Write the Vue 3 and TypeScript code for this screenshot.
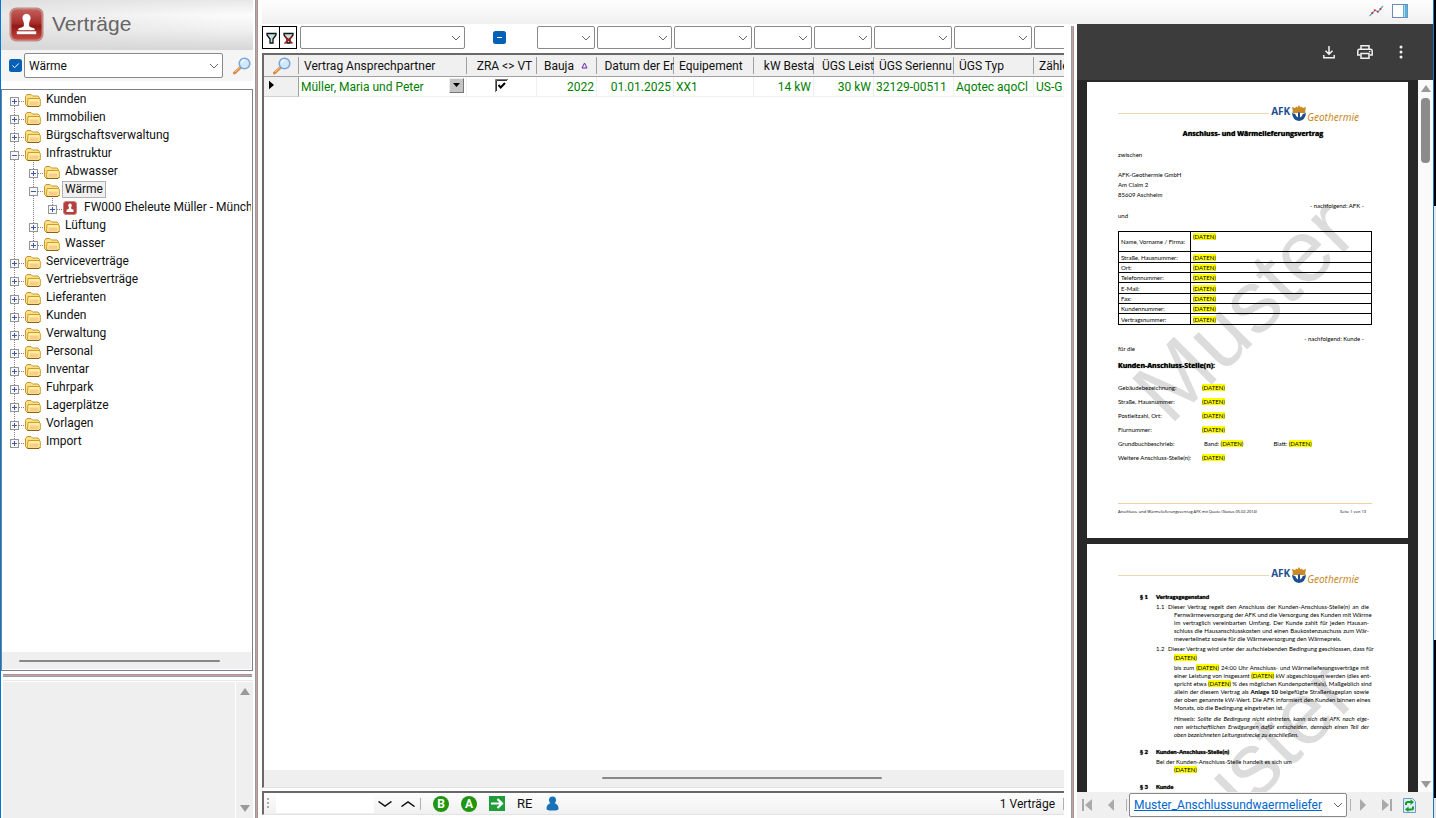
<script setup lang="ts">
import { computed, ref } from 'vue'

interface TreeNode {
  id: number
  label: string
  depth: number
  kind: 'folder' | 'contract'
  open?: boolean
}

const nodes = ref<TreeNode[]>([
  { id: 1, label: 'Kunden', depth: 0, kind: 'folder' },
  { id: 2, label: 'Immobilien', depth: 0, kind: 'folder' },
  { id: 3, label: 'Bürgschaftsverwaltung', depth: 0, kind: 'folder' },
  { id: 4, label: 'Infrastruktur', depth: 0, kind: 'folder', open: true },
  { id: 5, label: 'Abwasser', depth: 1, kind: 'folder' },
  { id: 6, label: 'Wärme', depth: 1, kind: 'folder', open: true },
  { id: 7, label: 'FW000 Eheleute Müller - Münch', depth: 2, kind: 'contract' },
  { id: 8, label: 'Lüftung', depth: 1, kind: 'folder' },
  { id: 9, label: 'Wasser', depth: 1, kind: 'folder' },
  { id: 10, label: 'Serviceverträge', depth: 0, kind: 'folder' },
  { id: 11, label: 'Vertriebsverträge', depth: 0, kind: 'folder' },
  { id: 12, label: 'Lieferanten', depth: 0, kind: 'folder' },
  { id: 13, label: 'Kunden', depth: 0, kind: 'folder' },
  { id: 14, label: 'Verwaltung', depth: 0, kind: 'folder' },
  { id: 15, label: 'Personal', depth: 0, kind: 'folder' },
  { id: 16, label: 'Inventar', depth: 0, kind: 'folder' },
  { id: 17, label: 'Fuhrpark', depth: 0, kind: 'folder' },
  { id: 18, label: 'Lagerplätze', depth: 0, kind: 'folder' },
  { id: 19, label: 'Vorlagen', depth: 0, kind: 'folder' },
  { id: 20, label: 'Import', depth: 0, kind: 'folder' },
])
const selectedId = ref(6)

const visibleNodes = computed(() => {
  const out: TreeNode[] = []
  let hiddenBelow = Infinity
  for (const n of nodes.value) {
    if (n.depth > hiddenBelow) continue
    hiddenBelow = Infinity
    out.push(n)
    if (!n.open) hiddenBelow = n.depth
  }
  return out
})

const isLast = (index: number, depth: number): boolean => {
  for (const n of visibleNodes.value.slice(index + 1)) {
    if (n.depth < depth) return true
    if (n.depth === depth) return false
  }
  return true
}

interface Column {
  key: string
  title: string
  value: string
  align: 'left' | 'right' | 'center'
}
const columns: Column[] = [
  { key: 'partner', title: 'Vertrag Ansprechpartner', value: 'Müller, Maria und Peter', align: 'left' },
  { key: 'zra', title: 'ZRA <> VT', value: '', align: 'center' },
  { key: 'year', title: 'Bauja', value: '2022', align: 'right' },
  { key: 'date', title: 'Datum der Er', value: '01.01.2025', align: 'right' },
  { key: 'equip', title: 'Equipement', value: 'XX1', align: 'left' },
  { key: 'kw', title: 'kW Besta', value: '14 kW', align: 'right' },
  { key: 'power', title: 'ÜGS Leist', value: '30 kW', align: 'right' },
  { key: 'serial', title: 'ÜGS Seriennu', value: '32129-00511', align: 'left' },
  { key: 'type', title: 'ÜGS Typ', value: 'Aqotec aqoCl', align: 'left' },
  { key: 'meter', title: 'Zähle', value: 'US-G', align: 'left' },
]
const zraChecked = ref(true)
const filterOn = ref(true)

const personRows = ['Name, Vorname / Firma:', 'Straße, Hausnummer:', 'Ort:', 'Telefonnummer:', 'E-Mail:', 'Fax:', 'Kundennummer:', 'Vertragsnummer:']
const siteRows = ['Gebäudebezeichnung:', 'Straße, Hausnummer:', 'Postleitzahl, Ort:', 'Flurnummer:', 'Grundbuchbeschrieb:', 'Weitere Anschluss-Stelle(n):']

const clause11 = [
  'Fernwärmeversorgung der AFK und die Versorgung des Kunden mit Wärme',
  'im vertraglich vereinbarten Umfang. Der Kunde zahlt für jeden Hausan-',
  'schluss die Hausanschlusskosten und einen Baukostenzuschuss zum Wär-',
]
</script>

<template>
  <div class="app">
    <aside class="side">
      <header class="side-head">
        <svg class="stamp" viewBox="0 0 36 36" aria-hidden="true">
          <defs>
            <linearGradient id="red" x1="0" y1="0" x2="0" y2="1">
              <stop offset="0" stop-color="#c4605c" />
              <stop offset=".45" stop-color="#a82f2c" />
              <stop offset=".55" stop-color="#8f1815" />
              <stop offset="1" stop-color="#c54a42" />
            </linearGradient>
          </defs>
          <rect x=".5" y=".5" width="35" height="35" rx="7" fill="#b98c88" />
          <rect x="2" y="2" width="32" height="32" rx="6" fill="url(#red)" stroke="#d08c86" />
          <path d="M18 7a4.200 4.200 0 0 1 4 5.500c-.8 2-1.600 3.500-1.300 6.500.2 1.500 1.800 2 4.300 2.500 1.200.3 1.500 1 1.500 2.500h-17c0-1.500.3-2.200 1.500-2.500 2.500-.5 4.100-1 4.300-2.500.3-3-.5-4.500-1.300-6.500A4.200 4.200 0 0 1 18 7z" fill="#fff" />
          <path d="M8 25h20v3H8z" fill="#fff" />
        </svg>
        <h1>Verträge</h1>
      </header>

      <div class="search">
        <label class="blue-check"><input v-model="filterOn" type="checkbox" aria-label="Filter aktiv" /><svg viewBox="0 0 13 13"><rect width="13" height="13" rx="2.500" fill="#0560b6" /><path v-if="filterOn" d="M3.500 6.500l2.200 2.200 4-4.200" fill="none" stroke="#fff" /></svg></label>
        <span class="combo">
          <select aria-label="Suche"><option>Wärme</option></select>
          <svg viewBox="0 0 10 6"><path d="M1 1l4 4 4-4" /></svg>
        </span>
        <button class="plain" aria-label="Suchen">
          <svg class="lens" viewBox="0 0 18 18"><path d="M1.500 16L8 10" stroke="#d9893f" stroke-width="3" stroke-linecap="round" /><path d="M2 15l5-4.500" stroke="#f6c79a" stroke-width="1" /><circle cx="11.500" cy="6.500" r="5.300" fill="#cfe8fb" stroke="#7ba6d6" stroke-width="1.500" /><path d="M8.500 6a3 3 0 0 1 3-2.800" fill="none" stroke="#fff" stroke-width="1.500" /></svg>
        </button>
      </div>

      <div class="tree-box">
        <ul class="tree" role="tree">
          <li v-for="(n, i) in visibleNodes" :key="n.id" class="node" role="treeitem">
            <span v-for="d in n.depth" :key="d" class="guide" :class="{ line: !isLast(i, d - 1) }"></span>
            <span class="guide stub line" :class="{ first: i === 0, end: isLast(i, n.depth) }">
              <button class="toggle" :aria-label="n.label + ' umschalten'" @click="n.open = !n.open">
                <svg viewBox="0 0 9 9"><rect x=".5" y=".5" width="8" height="8" fill="#f8f8f8" stroke="#959595" /><path :d="n.open ? 'M2 4.500h5' : 'M2 4.500h5M4.500 2v5'" stroke="#3c5aa8" /></svg>
              </button>
            </span>
            <svg v-if="n.kind === 'folder'" class="folder" viewBox="0 0 16 13"><path d="M.5 10.500V2.500L2 .5h4L7.500 2h5.500l1.500 1.500v7.500l-1 1.500h-11z" fill="#fbe08a" stroke="#c9952a" /><path d="M3 4.500h11l1.300.8v5.500l-1.500 1.500H3.500L2.500 11z" fill="#fff1a0" stroke="#d09a2c" /><path d="M4.500 7.500h9v3.500h-9z" fill="#fbcb8c" /><path d="M2.500 12.500h11.500l1.500-1.500" fill="none" stroke="#8a6210" /></svg>
            <svg v-else class="folder mini" viewBox="0 0 14 14"><rect x=".5" y=".5" width="13" height="13" rx="2.500" fill="#b53f3b" stroke="#c98580" /><path d="M7 2.500a1.800 1.800 0 0 1 1.500 2.800C8 6.500 8 7.500 8.500 8l2 .7V11h-7V8.700l2-.7c.5-.5.5-1.500 0-2.700A1.800 1.800 0 0 1 7 2.500z" fill="#fff" /></svg>
            <button class="label" :class="{ selected: n.id === selectedId }" @click="selectedId = n.id">{{ n.label }}</button>
          </li>
        </ul>
        <div class="hbar"><span></span></div>
      </div>
      <div class="split-h"></div>
      <div class="notes">
        <div class="notes-body"></div>
        <div class="vbar"><i class="up"></i><i class="down"></i></div>
      </div>
    </aside>

    <div class="split-v"></div>

    <main class="work">
      <div class="topbar">
        <button class="plain" aria-label="Diagramm"><svg class="chart" viewBox="0 0 15 12"><path d="M.5 11L4 7.500l2-2.500 3 2L14 1" fill="none" stroke="#5aa9dc" stroke-width="1.200" /><path d="M2.500 8.500l1.500-1M5 5.500L6.500 5M8 7l1.500-.5M11 4.500l1-1" stroke="#e02020" stroke-width="1.800" /></svg></button>
        <button class="plain" aria-label="Seitenleiste"><svg class="pane" viewBox="0 0 16 14"><rect x=".5" y=".5" width="15" height="13" fill="#fff" stroke="#6c8ab5" /><path d="M11 1h4.500v12.500H11z" fill="#5fb0d8" /><path d="M12 1h1v12h-1z" fill="#a8d8ee" /></svg></button>
      </div>

      <div class="panes">
        <section class="grid-pane">
          <div class="filters">
            <div class="filter-buttons">
              <button aria-label="Filtern"><svg viewBox="0 0 13 14"><path d="M2 2.500h9v1.500L8 8v4H5V8L2 4z" fill="#bfe3e3" stroke="#111" stroke-width="1.300" /></svg></button>
              <button aria-label="Filter löschen"><svg viewBox="0 0 13 14"><path d="M2 2.500h9v1.500L8 8v4H5V8L2 4z" fill="#bfe3e3" stroke="#111" stroke-width="1.300" /><path d="M2.500 5l8 7.500M10.500 5l-8 7.500" stroke="#a01818" stroke-width="1.600" /></svg></button>
            </div>
            <template v-for="c in columns" :key="c.key">
              <label v-if="c.key === 'zra'" class="cell zra blue-check"><input type="checkbox" :indeterminate="true" aria-label="ZRA <> VT Filter" /><svg viewBox="0 0 13 13"><rect width="13" height="13" rx="2.500" fill="#0560b6" /><path d="M4 6.500h5" stroke="#fff" /></svg></label>
              <span v-else class="cell combo" :class="c.key">
                <select :aria-label="c.title + ' Filter'"><option></option></select>
                <svg viewBox="0 0 10 6"><path d="M1 1l4 4 4-4" /></svg>
              </span>
            </template>
          </div>

          <div class="table-box">
            <div class="table-clip">
              <table>
                <colgroup>
                  <col class="marker" />
                  <col v-for="c in columns" :key="c.key" :class="c.key" />
                </colgroup>
                <thead>
                  <tr>
                    <th class="corner"><svg class="lens" viewBox="0 0 18 18"><path d="M1.500 16L8 10" stroke="#d9893f" stroke-width="3" stroke-linecap="round" /><path d="M2 15l5-4.500" stroke="#f6c79a" stroke-width="1" /><circle cx="11.500" cy="6.500" r="5.300" fill="#cfe8fb" stroke="#7ba6d6" stroke-width="1.500" /><path d="M8.500 6a3 3 0 0 1 3-2.800" fill="none" stroke="#fff" stroke-width="1.500" /></svg></th>
                    <th v-for="c in columns" :key="c.key" :class="[c.align, c.key]"><span>{{ c.title }}<svg v-if="c.key === 'year'" class="sort" viewBox="0 0 7 7"><path d="M3.500 1L6 6H1z" fill="none" stroke="#6a1fb0" /></svg></span></th>
                  </tr>
                </thead>
                <tbody>
                  <tr>
                    <td class="corner row-mark"><svg viewBox="0 0 6 10"><path d="M0 0l6 5-6 5z" /></svg></td>
                    <td v-for="c in columns" :key="c.key" :class="c.align">
                      <label v-if="c.key === 'zra'" class="old-check"><input v-model="zraChecked" type="checkbox" aria-label="ZRA <> VT" /><svg viewBox="0 0 13 13"><path d="M0 0h13v13H0z" fill="#fff" /><path d="M.5 13V.5H13" fill="none" stroke="#777" /><path d="M1.500 12V1.500H12" fill="none" stroke="#333" /><path v-if="zraChecked" d="M3.500 6l2.200 2.500L10 4" fill="none" stroke="#000" stroke-width="2" /></svg></label>
                      <div v-else-if="c.key === 'partner'" class="picker"><span>{{ c.value }}</span><button aria-label="Ansprechpartner wählen"><svg viewBox="0 0 7 4"><path d="M0 0h7L3.500 4z" /></svg></button></div>
                      <template v-else>{{ c.value }}</template>
                    </td>
                  </tr>
                </tbody>
              </table>
            </div>
            <div class="hbar wide"><span></span></div>
          </div>

          <footer class="status">
            <i class="grip"></i>
            <input class="jump" aria-label="Suchtext" />
            <button class="plain" aria-label="Weiter"><svg class="arrow" viewBox="0 0 14 6"><path d="M.5.500L7 5 13.500.500" /></svg></button>
            <button class="plain" aria-label="Zurück"><svg class="arrow" viewBox="0 0 14 6"><path d="M.5 5.500L7 1l6.500 4.500" /></svg></button>
            <i class="sep"></i>
            <button class="round">B</button>
            <button class="round">A</button>
            <button class="plain" aria-label="Öffnen"><svg class="go" viewBox="0 0 16 15"><path d="M0 0h16v15H0z" fill="#1f9d38" /><path d="M2 7.500h11M8.500 3l4.500 4.500-4.500 4.500" fill="none" stroke="#fff" stroke-width="2.200" /></svg></button>
            <button class="plain re">RE</button>
            <button class="plain" aria-label="Person"><svg class="person" viewBox="0 0 13 15"><circle cx="6.500" cy="4" r="3.500" fill="#1673b9" /><path d="M.5 12.500C.5 9 3 7 6.500 7s6 2 6 5.500c0 1.500-1 2-6 2s-6-.5-6-2z" fill="#1673b9" /></svg></button>
            <span class="count">1 Verträge</span>
            <i class="sep"></i>
          </footer>
        </section>

        <div class="split-v inner"></div>

        <section class="viewer">
          <div class="pdf-bar">
            <button class="plain" aria-label="Herunterladen"><svg class="dl" viewBox="0 0 12 14"><path d="M6 1v8M2.500 5.700L6 9.200l3.500-3.500M.8 10v2.800h10.400V10" fill="none" stroke="#f1f1f1" stroke-width="1.500" /></svg></button>
            <button class="plain" aria-label="Drucken"><svg class="pr" viewBox="0 0 16 14"><path d="M4 4V.8h8V4M3.500 10H.8V6Q.8 4.300 2.500 4.300h11q1.700 0 1.700 1.700v4h-2.700" fill="none" stroke="#f1f1f1" stroke-width="1.500" /><path d="M4 8.500h8v4.700H4z" fill="none" stroke="#f1f1f1" stroke-width="1.500" /><circle cx="12.700" cy="6.500" r=".8" fill="#f1f1f1" /></svg></button>
            <button class="plain" aria-label="Mehr"><svg class="more" viewBox="0 0 4 14"><circle cx="2" cy="2" r="1.500" /><circle cx="2" cy="7" r="1.500" /><circle cx="2" cy="12" r="1.500" /></svg></button>
          </div>

          <div class="pdf-area">
            <div class="pdf-scroll">
              <article class="page">
                <span class="watermark">Muster</span>
                <div class="brand"><i></i><b>AFK</b><svg viewBox="0 0 14 16"><path d="M0 2l3 1L4.500 1.500 5.500 2.500 7 0l1.500 2.500 1-1L11 3l3-1-.7 3.500.2 2.500H.5l.2-2.500z" fill="#c98a25" /><path d="M0 8q.5 7 7 8 6.500-1 7-8l-3.300 1q-.5 3-2.700 3.500V7.500H6v5Q3.800 12 3.300 9z" fill="#1d4f8f" /></svg><em>Geothermie</em></div>
                <h2 class="title">Anschluss- und Wärmelieferungsvertrag</h2>
                <p>zwischen</p>
                <address>AFK-Geothermie GmbH<br />Am Claim 2<br />85609 Aschheim</address>
                <p class="to-right">- nachfolgend: AFK -</p>
                <p>und</p>
                <table class="person-table">
                  <tbody>
                    <tr v-for="r in personRows" :key="r"><th scope="row">{{ r }}</th><td><mark>(DATEN)</mark></td></tr>
                  </tbody>
                </table>
                <p class="to-right">- nachfolgend: Kunde -</p>
                <p>für die</p>
                <h3>Kunden-Anschluss-Stelle(n):</h3>
                <dl>
                  <div v-for="r in siteRows" :key="r">
                    <dt>{{ r }}</dt>
                    <dd v-if="r.startsWith('Grund')" class="pair"><span>Band: <mark>(DATEN)</mark></span><span>Blatt: <mark>(DATEN)</mark></span></dd>
                    <dd v-else><mark>(DATEN)</mark></dd>
                  </div>
                </dl>
                <footer class="page-foot"><span>Anschluss- und Wärmelieferungsvertrag AFK mit Quote (Status 05.02.2014)</span><span>Seite 1 von 13</span></footer>
              </article>

              <article class="page second">
                <span class="watermark">Muster</span>
                <div class="brand"><i></i><b>AFK</b><svg viewBox="0 0 14 16"><path d="M0 2l3 1L4.500 1.500 5.500 2.500 7 0l1.500 2.500 1-1L11 3l3-1-.7 3.500.2 2.500H.5l.2-2.500z" fill="#c98a25" /><path d="M0 8q.5 7 7 8 6.500-1 7-8l-3.300 1q-.5 3-2.700 3.500V7.500H6v5Q3.800 12 3.300 9z" fill="#1d4f8f" /></svg><em>Geothermie</em></div>
                <h4><span>§ 1</span>Vertragsgegenstand</h4>
                <div class="clause">
                  <p class="lead"><span>1.1</span><span class="full">Dieser Vertrag regelt den Anschluss der Kunden-Anschluss-Stelle(n) an die</span></p>
                  <p v-for="l in clause11" :key="l" class="full">{{ l }}</p>
                  <p>meverteilnetz sowie für die Wärmeversorgung den Wärmepreis.</p>
                </div>
                <div class="clause spaced">
                  <p class="lead"><span>1.2</span><span class="full">Dieser Vertrag wird unter der aufschiebenden Bedingung geschlossen, dass für</span></p>
                  <p><mark>(DATEN)</mark></p>
                </div>
                <div class="clause">
                  <p class="full">bis zum <mark>(DATEN)</mark> 24:00 Uhr Anschluss- und Wärmelieferungsverträge mit</p>
                  <p class="full">einer Leistung von insgesamt <mark>(DATEN)</mark> kW abgeschlossen werden (dies ent-</p>
                  <p class="full">spricht etwa <mark>(DATEN)</mark> % des möglichen Kundenpotentials). Maßgeblich sind</p>
                  <p class="full">allein der diesem Vertrag als <strong>Anlage 10</strong> beigefügte Straßenlageplan sowie</p>
                  <p class="full">der oben genannte kW-Wert. Die AFK informiert den Kunden binnen eines</p>
                  <p>Monats, ob die Bedingung eingetreten ist.</p>
                </div>
                <div class="clause note">
                  <p class="full">Hinweis: Sollte die Bedingung nicht eintreten, kann sich die AFK nach eige-</p>
                  <p class="full">nen wirtschaftlichen Erwägungen dafür entscheiden, dennoch einen Teil der</p>
                  <p>oben bezeichneten Leitungsstrecke zu erschließen.</p>
                </div>
                <h4><span>§ 2</span>Kunden-Anschluss-Stelle(n)</h4>
                <div class="clause final">
                  <p class="lead">Bei der Kunden-Anschluss-Stelle handelt es sich um</p>
                  <p><mark>(DATEN)</mark></p>
                </div>
                <h4><span>§ 3</span>Kunde</h4>
              </article>
            </div>
            <div class="vbar pdf"><i class="up"></i><b></b><i class="down"></i></div>
          </div>

          <nav class="pager">
            <button class="plain" aria-label="Erste"><svg viewBox="0 0 11 12"><path d="M0 0h2v12H0zM10 0v12L3 6z" /></svg></button>
            <button class="plain prev" aria-label="Vorherige"><svg viewBox="0 0 11 12"><path d="M8 0v12L2 6z" /></svg></button>
            <i class="sep"></i>
            <span class="combo link">
              <select aria-label="Dokument"><option>Muster_Anschlussundwaermeliefer</option></select>
              <svg viewBox="0 0 10 6"><path d="M1 1l4 4 4-4" /></svg>
            </span>
            <i class="sep"></i>
            <button class="plain next" aria-label="Nächste"><svg viewBox="0 0 11 12"><path d="M3 0v12l6-6z" /></svg></button>
            <button class="plain last" aria-label="Letzte"><svg viewBox="0 0 11 12"><path d="M9 0h2v12H9zM1 0v12l7-6z" /></svg></button>
            <button class="plain" aria-label="Aktualisieren"><svg class="refresh" viewBox="0 0 13 15"><path d="M.5.500h9l3 3v11H.5z" fill="#dcebf7" stroke="#6f9cc4" /><path d="M3 7V5.500Q3 4 5 4h3.500M10 8.500V10q0 1.500-2 1.500H4.500" fill="none" stroke="#159a22" stroke-width="2" /><path d="M7.500 1.500L11 4 7.500 7zM5.500 8.500L2 11.500 5.500 14z" fill="#159a22" /></svg></button>
          </nav>
        </section>
      </div>
    </main>
    <div class="edge"></div>
  </div>
</template>

<style>
html,
body {
  background: #fff;
  overflow: hidden;
}
</style>

<style scoped>
* {
  box-sizing: border-box;
}
.app {
  display: flex;
  height: 100vh;
  border-left: 1px solid #0078d7;
  font: 12px/18px Roboto, "Open Sans", sans-serif;
  color: #111;
  background: #fff;
}
svg {
  display: block;
  flex: none;
}
button,
select,
input {
  font: inherit;
  color: inherit;
  margin: 0;
}
button {
  padding: 0;
}
.plain {
  border: 0;
  background: none;
  display: grid;
  place-items: center;
}
ul,
p,
h1,
h2,
h3,
h4,
dl,
dd {
  margin: 0;
  padding: 0;
}

/* combo boxes */
.combo {
  display: grid;
  height: 23px;
  min-width: 0;
}
.combo > * {
  grid-area: 1 / 1;
}
.combo select {
  appearance: none;
  width: 100%;
  min-width: 0;
  height: 100%;
  padding: 0 18px 0 4px;
  border: 1px solid #8a8a8a;
  border-radius: 2px;
  background: #fff;
}
.combo svg {
  width: 10px;
  height: 6px;
  justify-self: end;
  align-self: center;
  margin-right: 4px;
  fill: none;
  stroke: #666;
  pointer-events: none;
}
.blue-check {
  display: grid;
  place-items: center;
}
.blue-check > * {
  grid-area: 1 / 1;
  width: 13px;
  height: 13px;
  margin: 0;
}
.blue-check input,
.old-check input {
  opacity: 0;
}

/* left side */
.side {
  width: 252px;
  flex: none;
  display: flex;
  flex-direction: column;
}
.side-head {
  height: 50px;
  flex: none;
  display: flex;
  align-items: center;
  gap: 8px;
  padding: 0 8px 2px;
  background: linear-gradient(90deg, #d8d8d888 0, #d8d8d800 90%), linear-gradient(#e8e8e8, #fbfbfb 30%, #f0f0f0 60%, #d6d6d6);
}
.stamp {
  width: 35px;
  height: 35px;
}
h1 {
  font: 21px/26px "Liberation Sans", sans-serif;
  color: #666;
}
.search {
  display: flex;
  align-items: center;
  height: 31px;
  flex: none;
  margin-bottom: 8px;
  padding: 0 2px 0 8px;
  background: #f5f5f5;
}
.search .combo {
  flex: 1;
  margin: 0 10px 0 2px;
  height: 25px;
}
.lens {
  width: 18px;
  height: 18px;
}
.tree-box {
  flex: 1;
  min-height: 0;
  border: 1px solid #7f7f86;
  display: flex;
  flex-direction: column;
  justify-content: space-between;
  padding: 0 1px 1px 0;
}
.tree {
  list-style: none;
  overflow: hidden;
}
.node {
  display: flex;
  align-items: center;
  height: 18px;
  padding-left: 3px;
  white-space: nowrap;
}
.guide {
  width: 19px;
  height: 18px;
  flex: none;
}
.guide.line {
  background: repeating-linear-gradient(#808080 0 1px, #fff 1px 2px) 9px 0 / 1px 18px no-repeat;
}
.guide.stub {
  display: flex;
  padding: 7px 0 0 5px;
  background: repeating-linear-gradient(#808080 0 1px, #fff 1px 2px) 9px 0 / 1px 18px no-repeat,
    repeating-linear-gradient(90deg, #808080 0 1px, #fff 1px 2px) 14px 11px / 6px 1px no-repeat;
}
.guide.stub.first {
  background-position: 9px 8px, 14px 11px;
}
.guide.stub.end {
  background-size: 1px 11px, 6px 1px;
}
.toggle {
  width: 9px;
  height: 9px;
  border: 0;
  background: none;
}
.folder {
  width: 16px;
  height: 13px;
  margin: 2px 2px 0 1px;
}
.mini {
  width: 14px;
  height: 14px;
  margin: 2px 4px 0 1px;
}
.label {
  height: 17px;
  line-height: 15px;
  padding: 0 2px;
  border: 1px solid transparent;
  background: none;
}
.label.selected {
  background: #f0f0f0;
  border-color: #b0b0b0;
}
.hbar {
  height: 17px;
  flex: none;
  padding: 8px 31px 0 17px;
  background: #efefef;
}
.hbar span {
  display: block;
  height: 2px;
  border-radius: 1px;
  background: #888;
}
.split-h {
  height: 3px;
  flex: none;
  margin: 3px 1px 3px 2px;
  background: #cf9d9d;
  border: solid #999;
  border-width: 1px 0;
}
.notes {
  height: 138px;
  flex: none;
  display: flex;
  gap: 1px;
  margin-left: 2px;
  border-top: 1px solid #e8e8e8;
  padding-top: 1px;
}
.notes-body {
  flex: 1;
  background: #efefef;
}
.vbar {
  width: 17px;
  display: flex;
  flex-direction: column;
  justify-content: space-between;
  align-items: center;
  padding: 6px 0;
  background: #efefef;
}
.up,
.down {
  border: solid transparent;
  border-width: 0 5px 7px;
  border-bottom-color: #999;
}
.down {
  border-width: 7px 5px 0;
  border-top-color: #999;
}
.split-v {
  width: 3px;
  flex: none;
  margin: 0 4px 0 2px;
  background: #cf9d9d;
  border: solid #999;
  border-width: 0 1px;
}
.split-v.inner {
  margin: 2px 3px 0 7px;
}

/* main area */
.work {
  flex: 1;
  min-width: 0;
  display: flex;
  flex-direction: column;
}
.topbar {
  height: 24px;
  flex: none;
  display: flex;
  justify-content: flex-end;
  gap: 8px;
  padding: 0 25px 2px 0;
  background: linear-gradient(#fefefe, #f0f0f0);
}
.chart {
  width: 15px;
  height: 12px;
}
.pane {
  width: 16px;
  height: 14px;
}
.panes {
  flex: 1;
  min-height: 0;
  display: flex;
}
.grid-pane {
  flex: 1;
  min-width: 0;
  display: flex;
  flex-direction: column;
}
.filters {
  display: flex;
  gap: 2px;
  height: 29px;
  flex: none;
  padding-top: 2px;
  overflow: hidden;
}
.filter-buttons {
  display: flex;
  width: 35px;
  height: 23px;
  margin-right: 1px;
  flex: none;
  border: 1px solid #000;
}
.filter-buttons button {
  flex: 1;
  border: 0;
  background: #fff;
  display: grid;
  place-items: center;
}
.filter-buttons button + button {
  border-left: 1px solid #000;
}
.filter-buttons svg {
  width: 13px;
  height: 14px;
}
.cell {
  width: 78px;
  height: 23px;
  flex: none;
}
.cell.partner {
  width: 165px;
}
.cell.zra {
  width: 68px;
  padding-right: 4px;
}
.cell.year,
.cell.kw,
.cell.power {
  width: 58px;
}
.cell.date {
  width: 75px;
}
.table-box {
  flex: 1;
  min-height: 0;
  display: flex;
  flex-direction: column;
  border: solid #696969;
  border-width: 2px 0 0 2px;
  border-bottom: 1px solid #e3e3e3;
}
.table-clip {
  flex: 1;
  min-height: 0;
  overflow: hidden;
}
.table-clip table {
  table-layout: fixed;
  width: 850px;
  border-collapse: separate;
  border-spacing: 0;
}
col {
  width: 80px;
}
col.marker {
  width: 35px;
}
col.partner {
  width: 168px;
}
col.zra {
  width: 70px;
}
col.year,
col.kw,
col.power {
  width: 60px;
}
col.date {
  width: 77px;
}
.table-clip th,
.table-clip td {
  height: 22px;
  padding: 0 2px;
  font-weight: 400;
  white-space: nowrap;
  overflow: hidden;
  text-align: left;
}
.table-clip th {
  padding: 0 0 0 5px;
  background: linear-gradient(#a0a0a0, #a0a0a0) right 2px / 1px 17px no-repeat #f0f0f0;
  border-bottom: 1px solid #a0a0a0;
}
.table-clip td {
  height: 20px;
  color: #008000;
  border: solid #f0f0f0;
  border-width: 0 1px 1px 0;
}
.table-clip th.right,
.table-clip td.right {
  text-align: right;
}
.table-clip th.year {
  padding-right: 9px;
}
.table-clip th.center,
.table-clip td.center {
  text-align: center;
}
th span {
  display: inline-flex;
  align-items: center;
  gap: 7px;
}
.sort {
  width: 7px;
  height: 7px;
}
.table-clip th.corner {
  padding-left: 9px;
}
.table-clip td.corner {
  padding-left: 5px;
  background: #f0f0f0;
  border-color: #a0a0a0 #a0a0a0 #d0d0d0;
}
.row-mark svg {
  width: 5px;
  height: 10px;
  margin-bottom: 3px;
}
.picker {
  display: flex;
  justify-content: space-between;
}
.picker button {
  width: 15px;
  height: 15px;
  border: 1px solid;
  border-color: #eee #777 #777 #eee;
  background: #c4c4c4;
  display: grid;
  place-items: center;
}
.picker svg {
  width: 7px;
  height: 4px;
}
.old-check {
  display: inline-grid;
  vertical-align: top;
}
.old-check > * {
  grid-area: 1 / 1;
  width: 13px;
  height: 13px;
  margin: 1px 0 0;
}
.hbar.wide {
  padding: 7px 182px 0 338px;
}
.status {
  height: 24px;
  flex: none;
  display: flex;
  align-items: center;
  margin: 3px 0 3px;
  border: solid #696969;
  border-width: 2px 0 0 2px;
  border-bottom: 1px solid #e3e3e3;
  background: linear-gradient(#fdfdfd, #f0f0f0);
}
.grip {
  width: 2px;
  height: 12px;
  margin: 0 7px 0 3px;
  background: repeating-linear-gradient(#aaa 0 2px, transparent 2px 4px);
}
.jump {
  width: 98px;
  height: 18px;
  border: 0;
  background: #fff;
}
.arrow {
  width: 14px;
  height: 6px;
  margin: 0 5px 0 4px;
  fill: none;
  stroke: #111;
  stroke-width: 1.5;
}
.sep {
  width: 1px;
  height: 12px;
  flex: none;
  background: #b0b0b0;
}
.round {
  width: 16px;
  height: 16px;
  margin-left: 12px;
  border: 0;
  border-radius: 8px;
  background: #1f960d;
  color: #fff;
  font-weight: 700;
  line-height: 16px;
  text-align: center;
}
.go {
  width: 16px;
  height: 15px;
  margin: 0 12px;
}
.re {
  margin-right: 14px;
  font-size: 13px;
}
.person {
  width: 13px;
  height: 15px;
}
.count {
  margin: 0 8px 0 auto;
}

/* viewer */
.viewer {
  width: 356px;
  flex: none;
  display: flex;
  flex-direction: column;
}
.pdf-bar {
  height: 56px;
  flex: none;
  display: flex;
  align-items: center;
  justify-content: flex-end;
  gap: 22px;
  padding-right: 30px;
  background: #3c3c3c;
}
.dl {
  width: 12px;
  height: 14px;
}
.pr {
  width: 16px;
  height: 14px;
}
.more {
  width: 4px;
  height: 14px;
  margin-left: 4px;
  fill: #f1f1f1;
}
.pdf-area {
  flex: 1;
  min-height: 0;
  display: flex;
  background: #282828;
}
.pdf-scroll {
  flex: 1;
  min-width: 0;
  overflow: hidden;
  padding: 2px 10px 0;
}
.page {
  position: relative;
  height: 456px;
  margin-bottom: 6px;
  padding: 22px 36px 0 31px;
  overflow: hidden;
  background: #fff;
  font: 6px/10px Lato, sans-serif;
  color: #000;
  white-space: nowrap;
}
.page > * {
  position: relative;
}
.page > .watermark {
  position: absolute;
  left: 49%;
  top: 50%;
  transform: translate(-50%, -50%) rotate(-45deg);
  font: 88px/88px "Liberation Sans", sans-serif;
  color: #dcdcdc;
}
.brand {
  display: flex;
  align-items: flex-start;
  height: 22px;
  padding-right: 13px;
}
.brand i {
  flex: 1;
  height: 1px;
  margin: 9px 2px 0 0;
  background: #ecd6b4;
}
.brand b {
  font: 700 10px/14px "Open Sans", sans-serif;
  color: #1d4f8f;
}
.brand svg {
  width: 14px;
  height: 16px;
  margin: 1px 1px 0 2px;
}
.brand em {
  font: italic 10px/14px "Noto Sans", "Open Sans", sans-serif;
  color: #c98a25;
  margin-top: 6px;
}
.title {
  font: 700 7px/16px "Open Sans", sans-serif;
  text-align: center;
  text-shadow: 0 0 1px #000;
  padding-left: 16px;
}
.title + p {
  margin: 8px 0 10px;
}
address {
  font-style: normal;
  margin-bottom: 1px;
}
.to-right {
  text-align: right;
  padding-right: 8px;
}
.person-table {
  width: 100%;
  margin: 10px 0 9px;
  border-collapse: collapse;
}
.person-table th,
.person-table td {
  height: 10px;
  padding: 0 2px;
  border: 1px solid #000;
  font-weight: 400;
  line-height: 9px;
  text-align: left;
}
.person-table th {
  width: 72px;
}
.person-table tr:first-child td {
  height: 20px;
  vertical-align: top;
}
.person-table tr:nth-child(3n + 2) td {
  height: 11px;
}
mark {
  background: #ff0;
  color: #000;
}
h3 {
  margin: 7px 0 10px;
  font: 700 7px/10px "Open Sans", sans-serif;
  text-shadow: 0 0 1px #000;
}
dl > div {
  display: flex;
  height: 14px;
  line-height: 14px;
}
dt {
  width: 84px;
}
.pair {
  display: flex;
  gap: 30px;
  padding-left: 2px;
}
.page-foot {
  display: flex;
  justify-content: space-between;
  margin-top: 38px;
  padding: 3px 6px 0 0;
  border-top: 1px solid #f0cfa0;
  font: 4px/10px "Open Sans", sans-serif;
}
.page.second {
  line-height: 8px;
  padding-right: 39px;
}
.second .brand {
  height: 26px;
  padding-right: 10px;
}
h4 {
  display: flex;
  font-size: 6px;
  line-height: 10px;
  text-shadow: 0 0 1px #000;
  padding-left: 22px;
  margin-bottom: 1px;
}
strong {
  font-weight: 900;
}
h4 span {
  width: 16px;
}
.clause {
  padding-left: 56px;
  margin-bottom: 2px;
}
.clause.spaced p + p {
  margin-top: 1px;
}
.clause .lead {
  display: flex;
  margin-left: -18px;
}
.lead span:first-child:not(.full) {
  width: 12px;
  flex: none;
}
.lead .full {
  flex: 1;
  min-width: 0;
}
.full {
  text-align: justify;
  text-align-last: justify;
}
.note {
  font-style: italic;
  margin-top: 3px;
  margin-bottom: 8px;
}
.final {
  margin-bottom: 8px;
}
.vbar.pdf {
  width: 15px;
  padding: 5px 0 4px;
  background: #fafafa;
  justify-content: flex-start;
}
.pdf b {
  width: 9px;
  height: 65px;
  margin: 6px 0 auto;
  border-radius: 4px;
  background: #8b8b8b;
}
.pager {
  height: 26px;
  flex: none;
  display: flex;
  align-items: center;
  padding: 0 17px 0 5px;
  background: #f0f0f0;
}
.prev {
  margin: 0 9px 0 13px;
}
.next {
  margin: 0 13px 0 6px;
}
.last {
  margin-right: 11px;
}
.pager svg {
  width: 11px;
  height: 12px;
  fill: #aaa;
}
.pager .refresh {
  width: 13px;
  height: 15px;
}
.pager .combo {
  flex: 1;
  height: 24px;
  margin: 0 3px 0 2px;
}
.pager .combo svg {
  width: 10px;
  height: 6px;
  fill: none;
}
.link select {
  color: #0066cc;
  text-decoration: underline;
}
.edge {
  width: 3px;
  flex: none;
  border-left: 1px solid #1b76c4;
  background: linear-gradient(#000 206px, #e6e6e6 206px 640px, #000 640px 798px, #e6e6e6 798px);
}
</style>
